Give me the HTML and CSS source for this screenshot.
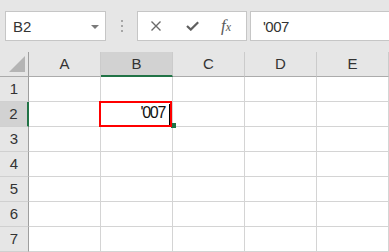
FILE: index.html
```html
<!DOCTYPE html>
<html lang="ja">

<head>
    <meta charset="UTF-8">
    <meta name="viewport" content="width=device-width, initial-scale=1.0">
    <title>Excel - '007</title>
    <link rel="stylesheet" href="styles.css">
</head>

<body>
    <div class="toolbar">
        <div class="name-box">
            <span>B2</span>
            <span class="caret"></span>
        </div>
        <div class="grip"><i></i><i></i><i></i></div>
        <div class="fx-buttons">
            <svg class="icon-x" width="12" height="10" viewBox="0 0 12 10">
                <path d="M1.5 0.5 L10.5 9.5 M10.5 0.5 L1.5 9.5" />
            </svg>
            <svg class="icon-check" width="13" height="10" viewBox="0 0 13 10">
                <path d="M1 5 L4.8 8.6 L12.2 1.2" />
            </svg>
            <span class="fx">f<small>x</small></span>
        </div>
        <div class="formula">'007</div>
    </div>

    <div class="sheet">
        <div class="corner"><span class="tri"></span></div>
        <div class="col-head">A</div>
        <div class="col-head sel">B</div>
        <div class="col-head">C</div>
        <div class="col-head">D</div>
        <div class="col-head">E</div>

        <div class="row-head">1</div>
        <div class="cell"></div><div class="cell"></div><div class="cell"></div><div class="cell"></div><div class="cell"></div>

        <div class="row-head sel">2</div>
        <div class="cell"></div>
        <div class="cell active">'007<span class="cursor"></span><span class="handle"></span></div>
        <div class="cell"></div><div class="cell"></div><div class="cell"></div>

        <div class="row-head">3</div>
        <div class="cell"></div><div class="cell"></div><div class="cell"></div><div class="cell"></div><div class="cell"></div>

        <div class="row-head">4</div>
        <div class="cell"></div><div class="cell"></div><div class="cell"></div><div class="cell"></div><div class="cell"></div>

        <div class="row-head">5</div>
        <div class="cell"></div><div class="cell"></div><div class="cell"></div><div class="cell"></div><div class="cell"></div>

        <div class="row-head">6</div>
        <div class="cell"></div><div class="cell"></div><div class="cell"></div><div class="cell"></div><div class="cell"></div>

        <div class="row-head">7</div>
        <div class="cell"></div><div class="cell"></div><div class="cell"></div><div class="cell"></div><div class="cell"></div>
    </div>
</body>

</html>
```

FILE: styles.css
```css
html {
    font-family: "Liberation Sans", Arial, sans-serif;
    font-size: 15px;
    margin: 0;
}

body {
    margin: 0;
    width: 389px;
    height: 252px;
    overflow: hidden;
    background: #e6e6e6;
    color: #333;
}

/* formula bar */

.toolbar {
    height: 52px;
    display: flex;
    align-items: center;
    padding-left: 5px;
    box-sizing: border-box;
    background: #e6e6e6;
}

.name-box {
    width: 101px;
    height: 30px;
    box-sizing: border-box;
    background: #fff;
    border: 1px solid #c6c6c6;
    padding: 0 6px 0 7px;
    display: flex;
    align-items: center;
    justify-content: space-between;
    color: #333;
}

.caret {
    width: 0;
    height: 0;
    border-left: 4px solid transparent;
    border-right: 4px solid transparent;
    border-top: 4px solid #7a7a7a;
    margin-top: 1px;
}

.grip {
    width: 2px;
    margin: 0 14px 0 15px;
    display: flex;
    flex-direction: column;
    gap: 3px;
}

.grip i {
    width: 2px;
    height: 2px;
    background: #a6a6a6;
}

.fx-buttons {
    width: 110px;
    height: 30px;
    box-sizing: border-box;
    background: #fff;
    border: 1px solid #c6c6c6;
    display: flex;
    align-items: center;
    padding-left: 12px;
}

.icon-x path {
    fill: none;
    stroke: #6a6a6a;
    stroke-width: 1.4;
}

.icon-check {
    margin-left: 24px;
}

.icon-check path {
    fill: none;
    stroke: #5f5f5f;
    stroke-width: 2.2;
}

.fx {
    margin-left: 22px;
    font-family: "Liberation Serif", "Times New Roman", serif;
    font-style: italic;
    font-size: 17px;
    color: #5a5a5a;
    line-height: 1;
    margin-top: -2px;
}

.fx small {
    font-size: 12px;
}

.formula {
    flex: 1;
    height: 30px;
    box-sizing: border-box;
    margin-left: 3px;
    margin-right: -2px;
    background: #fff;
    border: 1px solid #c6c6c6;
    padding-left: 12px;
    display: flex;
    align-items: center;
    font-size: 15px;
    letter-spacing: -0.5px;
    color: #333;
}

/* grid */

.sheet {
    display: grid;
    grid-template-columns: 29px repeat(5, 72px);
    grid-auto-rows: 25px;
}

.sheet > div {
    box-sizing: border-box;
}

.corner {
    background: #e6e6e6;
    border-right: 1px solid #9e9e9e;
    border-bottom: 1px solid #ababab;
    display: flex;
    justify-content: flex-end;
    align-items: flex-end;
    padding: 0 3px 4px 0;
}

.tri {
    width: 16px;
    height: 16px;
    background: #b4b4b4;
    clip-path: polygon(100% 0, 100% 100%, 0 100%);
}

.col-head {
    background: #e6e6e6;
    border-right: 1px solid #cbcbcb;
    border-bottom: 1px solid #ababab;
    text-align: center;
    line-height: 24px;
    color: #333;
}

.col-head.sel {
    background: #d2d2d2;
    border-bottom: 2px solid #217346;
    line-height: 23px;
}

.row-head {
    background: #e6e6e6;
    border-right: 1px solid #9e9e9e;
    border-bottom: 1px solid #d0d0d0;
    text-align: center;
    line-height: 23px;
    color: #333;
}

.row-head.sel {
    background: #d2d2d2;
    border-right: 2px solid #217346;
}

.cell {
    background: #fff;
    border-right: 1px solid #d4d4d4;
    border-bottom: 1px solid #d4d4d4;
}

.cell.active {
    position: relative;
    text-align: right;
    padding-right: 7px;
    font-size: 16px;
    line-height: 22px;
    letter-spacing: -1.3px;
    color: #111;
}

/* selection border lies over the grid lines */
.cell.active::after {
    content: "";
    position: absolute;
    top: -1px;
    left: -2px;
    width: 73px;
    height: 26px;
    box-sizing: border-box;
    border: 2px solid #ff0000;
}

.handle {
    position: absolute;
    left: 70px;
    top: 21px;
    width: 5px;
    height: 5px;
    background: #217346;
}

.cursor {
    position: absolute;
    left: 68px;
    top: 2px;
    width: 1px;
    height: 21px;
    background: #000;
    z-index: 1;
}
```
